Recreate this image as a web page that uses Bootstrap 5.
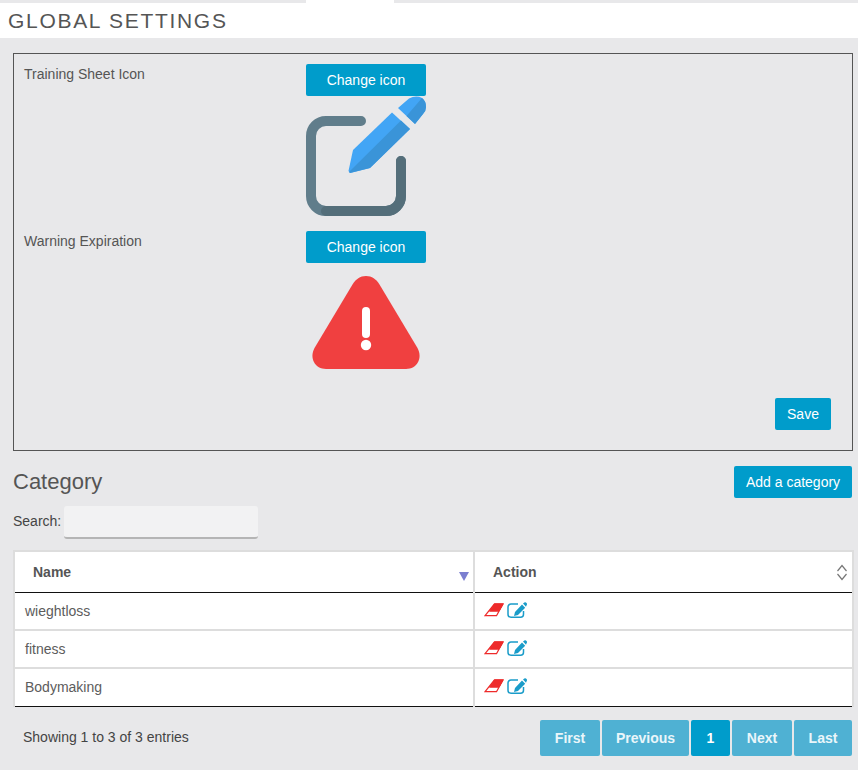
<!DOCTYPE html>
<html lang="en">
<head>
<meta charset="utf-8">
<title>Global Settings</title>
<link href="https://cdn.jsdelivr.net/npm/bootstrap@5.3.0/dist/css/bootstrap.min.css" rel="stylesheet">
<style>
html,body{height:770px;overflow:hidden}
body{background:#e8e8ea;font-family:"Liberation Sans",Arial,sans-serif;font-size:14px;color:#555;line-height:20px}
.top-strip{height:3px;background:#e8e8ea}
.top-tab{width:88px;height:3px;background:#fff;margin-left:306px}
.title-bar{height:35px;background:#fff;padding-left:8px}
.title-bar h1{margin:0;font-size:21px;line-height:35px;letter-spacing:1.7px;font-weight:400;color:#555;font-family:inherit}
.content-wrap{padding:15px 5px 0 13px}
.settings-box{height:398px;border:1px solid #555;padding:10px 21px 20px 10px;display:flex;flex-direction:column}
.set-row{display:flex}
.set-label{width:282px;line-height:20px}
.set-row-1{height:167px}
.btn-brand{background:#009ccb;border:0;border-radius:2px;color:#fff;font-size:14px;line-height:20px;padding:6px 12px}
.btn-brand:hover{background:#009ccb;color:#fff}
.btn-change{width:120px;height:32px;display:block}
.set-icon{display:block;width:120px;height:120px}
.save-line{margin-top:auto;display:flex;justify-content:flex-end}
.btn-save{width:56px;height:32px;padding:0}
.cat-head{display:flex;justify-content:space-between;align-items:center;margin-top:15px;height:32px}
.cat-head h2{font-size:22px;font-weight:400;line-height:36px;margin:0;color:#555;font-family:inherit}
.cat-head .btn-brand{height:32px;width:118px;padding:0;margin-right:1px}
.search-line{display:flex;align-items:flex-start;margin-top:8px;height:33px;color:#444}
.search-line label{line-height:30px}
.search-input{width:194px;height:33px;margin-left:3px;background:#f2f2f3;border:0;border-bottom:2px solid #b5b5b5;border-radius:3px}
.cat-table{width:841px;margin:11px 0 0 0;border-collapse:collapse;background:#fff;table-layout:fixed}
.cat-table th{height:41px;padding:0;border-top:2px solid #ddd;border-bottom:1px solid #111;font-size:14px;font-weight:700;color:#555;position:relative}
.cat-table th:first-child{padding-left:18px;width:460px;border-left:2px solid #ddd}
.cat-table th:last-child{padding-left:18px;border-left:2px solid #ddd;border-right:2px solid #ddd}
.cat-table td{height:38px;padding:0 0 0 10px;border-bottom:2px solid #ddd;border-left:2px solid #ddd;color:#5c5c5c}
.cat-table td:last-child{border-right:2px solid #ddd}
.cat-table tr:last-child td{border-bottom:1px solid #111;height:38px}
.sort-down{position:absolute;right:4px;top:20px;width:0;height:0;border-left:5px solid transparent;border-right:5px solid transparent;border-top:9px solid #7b7fd0}
.sort-both{position:absolute;right:4px;top:12px;width:12px;height:17px}
.act-icons{display:flex;gap:3px;align-items:center;margin:-2px 0 0 -1px}
.foot-line{display:flex;justify-content:space-between;align-items:flex-start;margin-top:13px}
.info-text{padding:7px 0 0 10px;color:#444}
.pager-line{display:flex;gap:2px;margin-right:1px}
.pg{height:36px;background:#4fb1d3;color:#eaf6fa;border-radius:2px;font-size:14px;font-weight:700;line-height:36px;text-align:center;text-decoration:none}
.pg-active{background:#009ccb;color:#fff}
.pg-first{width:60px}.pg-prev{width:87px}.pg-one{width:39px}.pg-next{width:60px}.pg-last{width:58px}
</style>
</head>
<body>
<div class="top-strip"><div class="top-tab"></div></div>
<div class="title-bar"><h1>GLOBAL SETTINGS</h1></div>
<div class="content-wrap">
  <div class="settings-box">
    <div class="set-row set-row-1">
      <div class="set-label">Training Sheet Icon</div>
      <div>
        <button class="btn btn-brand btn-change" type="button">Change icon</button>
        <svg class="set-icon" viewBox="0 0 120 120" aria-hidden="true">
          <path d="M55 25H20a15 15 0 0 0-15 15V100a15 15 0 0 0 15 15H80A15 15 0 0 0 95 100V65" fill="none" stroke="#607d8b" stroke-width="10" stroke-linecap="round"/>
          <path d="M20 115H80A15 15 0 0 0 95 100V65" fill="none" stroke="#546e7a" stroke-width="10" stroke-linecap="round"/>
          <path d="M86 16.500 104 33 64 72 44 77 42.500 75 47 54Z" fill="#42a5f5"/>
          <path d="M95 24.500 104 33 64 72 44 77 43 76Z" fill="#3a94d8"/>
          <path d="M92 12 103 2.500Q110-1 116 2 120 5 120 11 120 15 117 18L109 28Z" fill="#42a5f5"/>
          <path d="M116 2Q120 5 120 11 120 15 117 18L109 28 100.500 20Z" fill="#3a94d8"/>
        </svg>
      </div>
    </div>
    <div class="set-row">
      <div class="set-label">Warning Expiration</div>
      <div>
        <button class="btn btn-brand btn-change" type="button">Change icon</button>
        <svg class="set-icon" viewBox="0 0 120 120" aria-hidden="true">
          <path d="M60 13C66 13 70 16 73.500 21.500L111.500 85C117 95 111 106 100 106H20C9 106 3 95 8.500 85L46.500 21.500C50 16 54 13 60 13Z" fill="#f04040"/>
          <rect x="56" y="44" width="8" height="31" rx="4" fill="#fff"/>
          <circle cx="60" cy="82" r="5.200" fill="#fff"/>
        </svg>
      </div>
    </div>
    <div class="save-line"><button class="btn btn-brand btn-save" type="button">Save</button></div>
  </div>

  <div class="cat-head">
    <h2>Category</h2>
    <button class="btn btn-brand" type="button">Add a category</button>
  </div>
  <div class="search-line"><label for="cat-search">Search:</label><input id="cat-search" class="search-input" type="search"></div>

  <table class="cat-table">
    <thead>
      <tr><th>Name<span class="sort-down"></span></th>
      <th>Action<svg class="sort-both" viewBox="0 0 12 17" aria-hidden="true"><path d="M1.500 7 6 1.500 10.500 7M1.500 10 6 15.500 10.500 10" fill="none" stroke="#777" stroke-width="1.200"/></svg></th></tr>
    </thead>
    <tbody>
      <tr><td>wieghtloss</td><td><div class="act-icons">
        <svg width="20" height="14" viewBox="0 0 20 14" aria-hidden="true"><path d="M10.500 1H19L12.500 12.700H1Z" fill="#fff" stroke="#ee2b2b" stroke-width="1.300"/><path d="M10.500 1H19L15 8.200H5.500Z" fill="#ee2b2b" stroke="#ee2b2b"/></svg>
        <svg width="20" height="16" viewBox="0 0 20 16" aria-hidden="true"><path d="M11 2H4A3 3 0 0 0 1 5V12.200A3 3 0 0 0 4 15.200H13.500A3 3 0 0 0 16.500 12.200V9" fill="none" stroke="#1a9cc9" stroke-width="1.500"/><path d="M15 2.500 18.200 5.700 11 13 7 14 8 10ZM16 1.500 17.300.5A1.300 1.300 0 0 1 19 .5L19.700 1.200A1.300 1.300 0 0 1 19.700 3L19 4.700Z" fill="#1a9cc9"/></svg>
      </div></td></tr>
      <tr><td>fitness</td><td><div class="act-icons">
        <svg width="20" height="14" viewBox="0 0 20 14" aria-hidden="true"><path d="M10.500 1H19L12.500 12.700H1Z" fill="#fff" stroke="#ee2b2b" stroke-width="1.300"/><path d="M10.500 1H19L15 8.200H5.500Z" fill="#ee2b2b" stroke="#ee2b2b"/></svg>
        <svg width="20" height="16" viewBox="0 0 20 16" aria-hidden="true"><path d="M11 2H4A3 3 0 0 0 1 5V12.200A3 3 0 0 0 4 15.200H13.500A3 3 0 0 0 16.500 12.200V9" fill="none" stroke="#1a9cc9" stroke-width="1.500"/><path d="M15 2.500 18.200 5.700 11 13 7 14 8 10ZM16 1.500 17.300.5A1.300 1.300 0 0 1 19 .5L19.700 1.200A1.300 1.300 0 0 1 19.700 3L19 4.700Z" fill="#1a9cc9"/></svg>
      </div></td></tr>
      <tr><td>Bodymaking</td><td><div class="act-icons">
        <svg width="20" height="14" viewBox="0 0 20 14" aria-hidden="true"><path d="M10.500 1H19L12.500 12.700H1Z" fill="#fff" stroke="#ee2b2b" stroke-width="1.300"/><path d="M10.500 1H19L15 8.200H5.500Z" fill="#ee2b2b" stroke="#ee2b2b"/></svg>
        <svg width="20" height="16" viewBox="0 0 20 16" aria-hidden="true"><path d="M11 2H4A3 3 0 0 0 1 5V12.200A3 3 0 0 0 4 15.200H13.500A3 3 0 0 0 16.500 12.200V9" fill="none" stroke="#1a9cc9" stroke-width="1.500"/><path d="M15 2.500 18.200 5.700 11 13 7 14 8 10ZM16 1.500 17.300.5A1.300 1.300 0 0 1 19 .5L19.700 1.200A1.300 1.300 0 0 1 19.700 3L19 4.700Z" fill="#1a9cc9"/></svg>
      </div></td></tr>
    </tbody>
  </table>

  <div class="foot-line">
    <div class="info-text">Showing 1 to 3 of 3 entries</div>
    <nav class="pager-line" aria-label="Pagination">
      <a class="pg pg-first" href="#">First</a>
      <a class="pg pg-prev" href="#">Previous</a>
      <a class="pg pg-one pg-active" href="#">1</a>
      <a class="pg pg-next" href="#">Next</a>
      <a class="pg pg-last" href="#">Last</a>
    </nav>
  </div>
</div>
<script src="https://cdn.jsdelivr.net/npm/bootstrap@5.3.0/dist/js/bootstrap.bundle.min.js"></script>
</body>
</html>
